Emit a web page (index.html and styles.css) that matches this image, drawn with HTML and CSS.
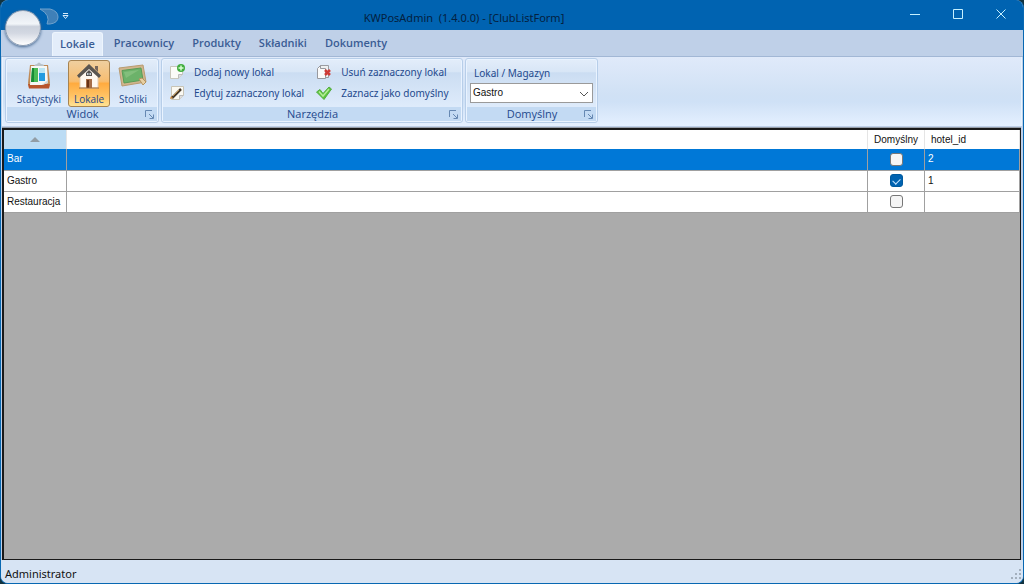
FILE: index.html
```html
<!DOCTYPE html>
<html lang="pl">
<head>
<meta charset="utf-8">
<title>KWPosAdmin (1.4.0.0) - [ClubListForm]</title>
<link rel="stylesheet" href="styles.css">
</head>
<body>
<div class="window">
  <header class="titlebar">
    <h1 class="title">KWPosAdmin&nbsp; (1.4.0.0) - [ClubListForm]</h1>
    <div class="window-buttons">
      <button class="window-button" aria-label="Minimalizuj"><svg width="12" height="12" viewBox="0 0 12 12"><path d="M1 6.5h10"/></svg></button>
      <button class="window-button" aria-label="Maksymalizuj"><svg width="12" height="12" viewBox="0 0 12 12"><path d="M1.500 1.500h9v9h-9z"/></svg></button>
      <button class="window-button" aria-label="Zamknij"><svg width="12" height="12" viewBox="0 0 12 12"><path d="M1.500 1.500l9 9M10.500 1.500l-9 9"/></svg></button>
    </div>
  </header>
  <button class="orb" aria-label="Menu"></button>
  <button class="quick-access" aria-label="Pasek szybkiego dostępu">
    <svg width="32" height="18" viewBox="0 0 32 18"><path d="M1 1h10q8 2 8 8t-8 7h-3q4-9-7-15z" fill="#3f80b8" stroke="#6fa2cd"/><path d="M24 5.500h5" stroke="#d5ebfb"/><path d="M24 7.500h5l-2.500 3z" fill="none" stroke="#d5ebfb"/></svg>
  </button>
  <nav class="tabs">
    <button class="tab tab-active">Lokale</button>
    <button class="tab">Pracownicy</button>
    <button class="tab">Produkty</button>
    <button class="tab">Składniki</button>
    <button class="tab">Dokumenty</button>
  </nav>
  <div class="ribbon">
    <section class="group group-view">
      <div class="group-body large-tools">
        <button class="large large-wide">
          <svg width="28" height="28" viewBox="0 0 28 28"><path d="M5 3h18l2 18-1 5H4l-1-5z" fill="#c08a55"/><path d="M3 22h22l-1 4.500H4z" fill="#b9552c"/><path d="M6 4h16l1 17-6 2H5z" fill="#f5f7f5"/><path d="M17 23l6-5v3z" fill="#cfd4d6"/><path d="M9 4q1-2 3-2 2-3 4 0 3 0 3 2z" fill="#b8c2c8"/><path d="M7 6h6v14H6z" fill="#4abb55"/><path d="M7 6h2v14H6z" fill="#168c35"/><path d="M14 11h6v8h-6z" fill="#239be0"/><path d="M14 6h6v5h-6z" fill="#b9e5f5"/></svg>
          <span>Statystyki</span>
        </button>
        <button class="large large-active">
          <svg width="28" height="28" viewBox="0 0 28 28"><path d="M5 14l9-9 9 9v12H5z" fill="#fff8ef"/><path d="M5 15v11h18V15" fill="none" stroke="#e3cbb0"/><path d="M2 13.500L14 2l12 11.500-2 2.500L14 7 4 16z" fill="#5a5651"/><path d="M20 4h3v6l-3-3z" fill="#75665c"/><path d="M11 17h6v9h-6z" fill="#a66d48"/><path d="M12 18h2v8h-2z" fill="#673215"/><path d="M11 14v-3l3-3 3 3v3z" fill="#55514f"/><path d="M12 11h1.500v2H12zM14.500 11H16v2h-1.500z" fill="#c1cdd3"/><path d="M4 26h20" stroke="#a06b36"/></svg>
          <span>Lokale</span>
        </button>
        <button class="large">
          <svg width="30" height="28" viewBox="0 0 30 28"><path d="M1 6l24-3 3 17-24 4z" fill="#d0b58d" stroke="#b99b70"/><path d="M4 8.500l19-2.500 2 12-19 3z" fill="#6cb26a" stroke="#5a9c58"/><path d="M6 10l15-2-13 8z" fill="#82bf7c"/><path d="M21 17l3-1 4 4-3 3z" fill="#e7cfa2" stroke="#b4935f"/></svg>
          <span>Stoliki</span>
        </button>
      </div>
      <footer class="caption"><span>Widok</span><button class="launcher" aria-label="Opcje widoku"><svg width="9" height="9" viewBox="0 0 9 9"><path d="M.5 7V.5H7M4 4l4 4M8.500 4.500v4h-4"/></svg></button></footer>
    </section>
    <section class="group group-tools">
      <div class="group-body small-tools">
        <button class="small">
          <svg width="16" height="16" viewBox="0 0 16 16"><path d="M1.500 2.500h12v8l-4 4h-8z" fill="#fbfbf8" stroke="#c8c7bc"/><path d="M13.500 10.500h-4v4" fill="#ddd" stroke="#bbb"/><circle cx="12" cy="4" r="4" fill="#43ad40"/><path d="M12 1.500v5M9.500 4h5" stroke="#d7ffd1" stroke-width="1.500"/></svg>
          <span>Dodaj nowy lokal</span>
        </button>
        <button class="small">
          <svg width="16" height="16" viewBox="0 0 16 16"><path d="M2.500 1.500h12v9l-4 4h-8z" fill="#fbf9f2" stroke="#c8c4b6"/><path d="M14.500 10.500h-4v4" fill="#ddd" stroke="#bbb"/><path d="M3 13L12 4" stroke="#44382b" stroke-width="2.500"/><path d="M4 11l6-6" stroke="#c59a57"/><path d="M1 14l1-3 2 2z" fill="#c7802f"/></svg>
          <span>Edytuj zaznaczony lokal</span>
        </button>
        <button class="small">
          <svg width="16" height="16" viewBox="0 0 16 16"><path d="M4.500 1.500h8v12h-8z" fill="#eef0f1" stroke="#9a9ca1"/><path d="M1.500 4.500l3-3v3h5v10h-8z" fill="#fafafa" stroke="#98999e"/><path d="M9 6l5 5M14 6l-5 5" stroke="#cf3a35" stroke-width="2.500"/></svg>
          <span>Usuń zaznaczony lokal</span>
        </button>
        <button class="small">
          <svg width="16" height="16" viewBox="0 0 16 16"><path d="M.5 7L4 4.500l3 4 6-6.500 2.500 2L8 14.500z" fill="#5cc43c" stroke="#55ad45"/><path d="M3 6.500l4 4.500 6-7" fill="none" stroke="#b3ec97" stroke-width="1.500"/></svg>
          <span>Zaznacz jako domyślny</span>
        </button>
      </div>
      <footer class="caption"><span>Narzędzia</span><button class="launcher" aria-label="Opcje narzędzi"><svg width="9" height="9" viewBox="0 0 9 9"><path d="M.5 7V.5H7M4 4l4 4M8.500 4.500v4h-4"/></svg></button></footer>
    </section>
    <section class="group group-default">
      <div class="group-body field">
        <label for="place">Lokal / Magazyn</label>
        <select id="place"><option>Gastro</option><option>Bar</option><option>Restauracja</option></select>
        <svg class="chevron" width="10" height="6" viewBox="0 0 10 6"><path d="M1 1l4 4 4-4"/></svg>
      </div>
      <footer class="caption"><span>Domyślny</span><button class="launcher" aria-label="Opcje domyślne"><svg width="9" height="9" viewBox="0 0 9 9"><path d="M.5 7V.5H7M4 4l4 4M8.500 4.500v4h-4"/></svg></button></footer>
    </section>
  </div>
  <main class="workspace">
    <table class="grid">
      <colgroup><col class="col-name"><col><col class="col-default"><col class="col-hotel"></colgroup>
      <thead>
        <tr><th class="sorted" aria-sort="ascending"><svg width="10" height="5" viewBox="0 0 10 5"><path d="M0 5l5-5 5 5z" fill="#929da5"/></svg></th><th></th><th class="center">Domyślny</th><th class="hotel-head">hotel_id</th></tr>
      </thead>
      <tbody>
        <tr class="selected"><td>Bar</td><td></td><td class="center"><input type="checkbox" aria-label="Bar domyślny"></td><td>2</td></tr>
        <tr><td>Gastro</td><td></td><td class="center"><input type="checkbox" aria-label="Gastro domyślny" checked></td><td>1</td></tr>
        <tr><td>Restauracja</td><td></td><td class="center"><input type="checkbox" aria-label="Restauracja domyślny"></td><td></td></tr>
      </tbody>
    </table>
  </main>
  <footer class="status">
    <span>Administrator</span>
    <svg width="12" height="12" viewBox="0 0 12 12" fill="#a3afbd"><path d="M9 1h2v2H9zM9 5h2v2H9zM5 5h2v2H5zM9 9h2v2H9zM5 9h2v2H5zM1 9h2v2H1z"/></svg>
  </footer>
</div>
</body>
</html>
```
FILE: styles.css
```css
* { box-sizing: border-box; }
html, body { height: 100%; }
body {
  margin: 0;
  background: #12333f;
  font: 11px/14px "Noto Sans", "Open Sans", sans-serif;
}
button {
  margin: 0;
  padding: 0;
  border: 0;
  background: none;
  color: #24498d;
  font: inherit;
}
svg { display: block; flex: none; }
.window {
  position: relative;
  display: flex;
  flex-direction: column;
  height: 100%;
  overflow: hidden;
  border: solid #0868b2;
  border-width: 0 1px 1px;
  border-radius: 8px;
  background: #bfd0e8;
}
.titlebar {
  position: relative;
  display: flex;
  align-items: center;
  justify-content: center;
  flex: 0 0 30px;
  background: #0063b1;
}
.title {
  margin: 0;
  padding: 6px 96px 0 0;
  color: #04213f;
  font-size: 11px;
  font-weight: 400;
}
.window-buttons { position: absolute; top: 0; right: 1px; display: flex; }
.window-button {
  display: grid;
  place-items: center;
  width: 43px;
  height: 28px;
}
.window-button path { fill: none; stroke: #c5f0ff; }
.orb {
  position: absolute;
  top: 10px;
  left: 4px;
  width: 36px;
  height: 36px;
  border: 1px solid #8b9cb2;
  border-radius: 50%;
  background: linear-gradient(#dfe4ec, #f2f5f9 38%, #cbd1dc 46%, #d3d8e2 65%, #fff);
  box-shadow: 0 1px 3px #45678e;
}
.quick-access { position: absolute; top: 8px; left: 38px; }
.tabs {
  display: flex;
  flex: 0 0 26px;
  padding: 2px 0 0 51px;
  border-bottom: 1px solid #a2b7d5;
}
.tab {
  height: 22px;
  padding: 0 9px;
  font-family: "Open Sans", "Noto Sans", sans-serif;
  font-weight: 600;
  color: #3a5c94;
}
.tab-active {
  margin-right: 2px;
  padding: 0 7px 2px;
  height: 24px;
  border: 1px solid #edf5fd;
  border-bottom: 0;
  border-radius: 3px 3px 0 0;
  background: #e3edfa;
}
.ribbon {
  display: flex;
  flex: none;
  gap: 2px;
  margin: 0 1px;
  padding: 1px 2px 3px;
  border: 1px solid #e8f4ff;
  border-width: 0 1px;
  background: linear-gradient(#e0eafa, #d0e1f5 55%, #cfe1f6 65%, #e5f0ff);
  font-size: 10px;
}
.group {
  display: flex;
  flex-direction: column;
  border: 1px solid #b7cee9;
  border-radius: 3px;
  background: linear-gradient(#e3edfa, #d8e6f6 20%, #cbddf2 22%, #deebfb 75%);
  box-shadow: inset 0 0 0 1px #e9f3ff;
  color: #24498d;
}
.group-view { width: 154px; }
.group-tools { width: 302px; }
.group-default { width: 133px; }
.group-body { height: 48px; }
.large-tools { display: flex; gap: 3px; padding: 1px 0 0 7px; }
.large {
  display: flex;
  flex-direction: column;
  align-items: center;
  width: 40px;
  height: 47px;
  padding-top: 2px;
  font-family: "Open Sans", "Noto Sans", sans-serif;
  font-size: 10px;
}
.large span { line-height: 18px; }
.large-wide { width: 52px; }
.large-active {
  width: 42px;
  border: 1px solid #a78350;
  border-radius: 3px;
  background: linear-gradient(#efcf9f, #f7bd70 45%, #ffab3f 50%, #ffc568 80%, #ffe393);
  padding-top: 1px;
}
.small-tools {
  display: grid;
  grid: repeat(2, 21px) / auto-flow max-content;
  column-gap: 12px;
  padding: 2px 7px;
}
.small { display: flex; align-items: center; gap: 9px; }
.field {
  position: relative;
  display: flex;
  flex-direction: column;
  gap: 3px;
  padding: 7px 4px 0;
}
.field label { padding-left: 4px; }
.field select {
  width: 100%;
  height: 20px;
  padding: 0 2px;
  border: 1px solid #9a9a9a;
  border-radius: 0;
  background: #fff;
  color: #111;
  font: 10px/16px "Liberation Sans", sans-serif;
  appearance: none;
}
.chevron { position: absolute; right: 8px; bottom: 10px; pointer-events: none; }
.chevron path { fill: none; stroke: #555; }
.caption {
  display: flex;
  align-items: center;
  height: 14px;
  margin: 0 1px 1px;
  background: #c3daf3;
  font-family: "Open Sans", "Noto Sans", sans-serif;
  font-size: 11px;
}
.caption span { flex: 1; padding-left: 13px; text-align: center; }
.launcher { width: 12px; }
.launcher path { fill: none; stroke: #6688b2; }
.workspace {
  flex: 1;
  min-height: 0;
  margin: 2px 2px 0 1px;
  border: 2px solid #191919;
  border-width: 2px 1px 1px 2px;
  background: #ababab;
  box-shadow: 0 -1px #989faa;
}
.grid {
  width: 100%;
  border-collapse: collapse;
  table-layout: fixed;
  background: #fff;
  color: #111;
  font: 10px/14px "Liberation Sans", sans-serif;
}
.col-name { width: 62px; }
.col-default { width: 57px; }
.col-hotel { width: 95px; }
.grid th, .grid td {
  height: 21px;
  padding: 0 3px;
  font-weight: 400;
  text-align: left;
  white-space: nowrap;
}
.grid th { height: 19px; border-right: 1px solid #e5e5e5; }
.grid td { border: solid #a0a0a0; border-width: 0 1px 1px 0; }
.grid .sorted { background: #bcdcf4; }
.sorted svg { margin: 0 auto; }
.grid .center { position: relative; padding: 0; text-align: center; }
.grid .hotel-head { padding-left: 6px; }
.grid .selected { background: #0078d7; color: #fff; }
.grid input {
  appearance: none;
  display: block;
  width: 13px;
  height: 13px;
  margin: 0 auto;
  border: 1px solid #777;
  border-radius: 3px;
  background: #f5f5f5;
}
.grid input:checked {
  border-color: #005a9e;
  background: #0063b1;
}
.grid .center:has(:checked)::after {
  content: "";
  position: absolute;
  top: 7px;
  left: 25px;
  width: 6px;
  height: 4px;
  border: solid #c7e5ff;
  border-width: 0 0 1px 1px;
  rotate: -45deg;
}
.status {
  display: flex;
  align-items: center;
  justify-content: space-between;
  flex: 0 0 23px;
  padding: 4px 1px 0 4px;
  background: #d7e4f4;
  color: #111;
}
```
